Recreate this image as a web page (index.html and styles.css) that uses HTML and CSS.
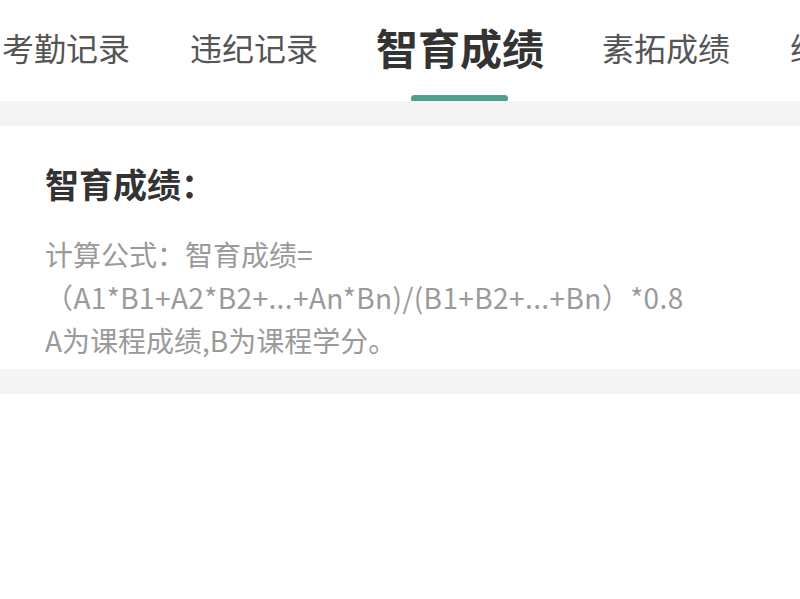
FILE: index.html
```html
<!DOCTYPE html>
<html lang="zh-CN">
<head>
    <meta charset="UTF-8">
    <meta name="viewport" content="width=device-width, initial-scale=1.0">
    <title>智育成绩</title>
    <link rel="stylesheet" href="styles.css">
</head>
<body>
    <!-- 顶部标签 -->
    <div class="tab-bar">
        <div class="tabs">
            <div class="tab">考勤记录</div>
            <div class="tab">违纪记录</div>
            <div class="tab active">智育成绩</div>
            <div class="tab">素拓成绩</div>
            <div class="tab">综测成绩</div>
        </div>
    </div>

    <div class="divider"></div>

    <!-- 说明 -->
    <div class="card">
        <h2 class="card-title">智育成绩：</h2>
        <p class="formula">
            <span class="line">计算公式：智育成绩=</span>
            <span class="line wide">（A1*B1+A2*B2+...+An*Bn)/(B1+B2+...+Bn）*0.8</span>
            <span class="line">A为课程成绩,B为课程学分。</span>
        </p>
    </div>

    <div class="divider"></div>

    <div class="content"></div>
</body>
</html>
```

FILE: styles.css
```css
body {
    font-family: "Noto Sans CJK SC", "Noto Sans", sans-serif;
    margin: 0;
    padding: 0;
    background: #fff;
    overflow: hidden;
}

.tab-bar {
    height: 101px;
    background: #fff;
    overflow: hidden;
}

.tabs {
    display: flex;
    align-items: center;
    gap: 60px;
    height: 94px;
    padding-left: 2px;
    white-space: nowrap;
}

.tab {
    position: relative;
    font-size: 32px;
    line-height: 1;
    color: #555;
    flex-shrink: 0;
}

.tab.active {
    font-size: 42px;
    font-weight: bold;
    color: #333;
    margin: 0 -2px;
}

.tab.active::after {
    content: "";
    position: absolute;
    left: 35px;
    top: 69px;
    width: 97px;
    height: 7px;
    border-radius: 4px;
    background: #4f9e8f;
}

.divider {
    height: 25px;
    background: #f4f4f4;
}

.card {
    background: #fff;
    padding: 33px 45px 7px;
}

.card-title {
    margin: 0;
    font-size: 34px;
    line-height: 50px;
    font-weight: bold;
    color: #333;
}

.formula {
    margin: 24px 0 0;
    font-size: 28px;
    line-height: 43px;
    color: #9a9a9a;
}

.line {
    display: block;
}

.line.wide {
    letter-spacing: 0.4px;
}

.content {
    height: 220px;
}
```
